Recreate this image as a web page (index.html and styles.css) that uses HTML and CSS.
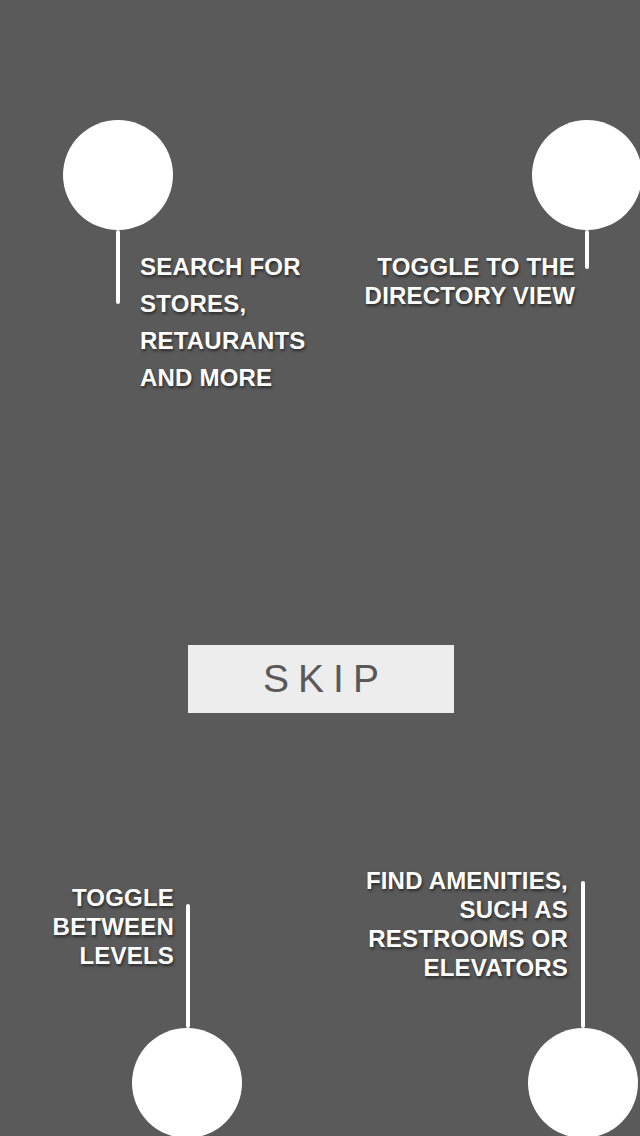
FILE: index.html
```html
<!DOCTYPE html>
<html lang="en">
<head>
<meta charset="utf-8">
<title>Tour</title>
<link rel="stylesheet" href="styles.css">
</head>
<body>
<div class="screen">
  <div class="top">
    <div class="mark mark-search">
      <div class="dot"></div>
      <div class="row">
        <div class="stem stem-search"></div>
        <p class="label label-search">SEARCH FOR<br>STORES,<br>RETAURANTS<br>AND MORE</p>
      </div>
    </div>
    <div class="mark mark-directory">
      <div class="dot"></div>
      <div class="row">
        <p class="label label-directory">TOGGLE TO THE<br>DIRECTORY VIEW</p>
        <div class="stem stem-directory"></div>
      </div>
    </div>
  </div>
  <div class="middle">
    <button class="skip" type="button">SKIP</button>
  </div>
  <div class="bottom">
    <div class="mark mark-levels">
      <div class="row">
        <p class="label label-levels">TOGGLE<br>BETWEEN<br>LEVELS</p>
        <div class="stem stem-levels"></div>
      </div>
      <div class="dot"></div>
    </div>
    <div class="mark mark-amenities">
      <div class="row">
        <p class="label label-amenities">FIND AMENITIES,<br>SUCH AS<br>RESTROOMS OR<br>ELEVATORS</p>
        <div class="stem stem-amenities"></div>
      </div>
      <div class="dot"></div>
    </div>
  </div>
</div>
</body>
</html>
```

FILE: styles.css
```css
* { box-sizing: border-box; }
html, body {
  margin: 0;
  padding: 0;
  background: #5a5a5a;
}
.screen {
  width: 640px;
  height: 1136px;
  overflow: hidden;
  display: grid;
  grid-template-rows: 645px 68px 1fr;
  font-family: "Liberation Sans", Arial, sans-serif;
}
.top {
  display: flex;
  justify-content: space-between;
  align-items: flex-start;
  padding-top: 120px;
}
.mark {
  display: flex;
  flex-direction: column;
}
.dot {
  width: 110px;
  height: 110px;
  border-radius: 50%;
  background: #ffffff;
  flex: none;
}
.row {
  display: flex;
  align-items: flex-start;
}
.stem {
  width: 4px;
  background: #ffffff;
  border-radius: 2px;
  flex: none;
}
.label {
  margin: 0;
  color: #ffffff;
  font-weight: 700;
  font-size: 24px;
  line-height: 29px;
  letter-spacing: 0.2px;
  white-space: nowrap;
  text-shadow: 1px 2px 3px rgba(0, 0, 0, 0.55);
}

/* top-left */
.mark-search { margin-left: 63px; }
.mark-search .row { padding-left: 53px; }
.stem-search { height: 74px; }
.label-search {
  margin-left: 20px;
  margin-top: 18px;
  line-height: 37px;
}

/* top-right */
.mark-directory {
  align-items: flex-end;
  margin-right: -2px;
}
.mark-directory .row { padding-right: 53px; }
.stem-directory { height: 39px; }
.label-directory {
  text-align: right;
  margin-right: 10px;
  margin-top: 22px;
}

/* middle */
.middle {
  display: flex;
  padding-left: 188px;
}
.skip {
  width: 266px;
  height: 68px;
  margin: 0;
  border: 0;
  border-radius: 0;
  background: #ededed;
  color: #595959;
  font-family: "Liberation Sans", Arial, sans-serif;
  font-weight: 400;
  font-size: 39px;
  line-height: 68px;
  letter-spacing: 9px;
  padding: 0 0 0 9px;
  text-align: center;
}

/* bottom */
.bottom {
  display: flex;
  justify-content: space-between;
  align-items: flex-end;
  margin-bottom: -2px;
}
.mark-levels {
  width: 242px;
  align-items: flex-end;
}
.mark-levels .row { padding-right: 52px; }
.stem-levels {
  height: 124px;
  margin-top: 21px;
}
.label-levels {
  text-align: right;
  margin-right: 12px;
}
.mark-amenities {
  align-items: flex-end;
  margin-right: 2px;
}
.mark-amenities .row { padding-right: 53px; }
.stem-amenities {
  height: 147px;
  margin-top: 15px;
}
.label-amenities {
  text-align: right;
  margin-right: 13px;
}
```
